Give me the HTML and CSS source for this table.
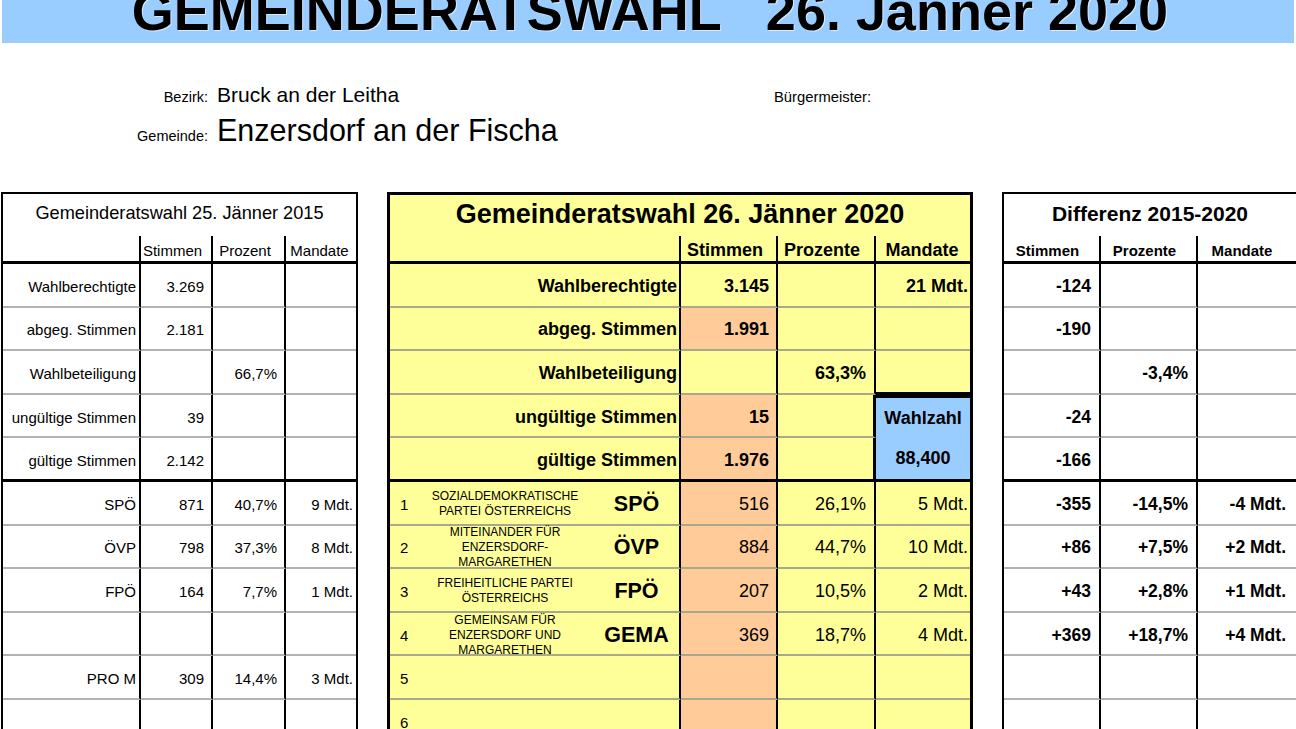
FILE: index.html
```html
<!DOCTYPE html>
<html lang="de">
<head>
<meta charset="utf-8">
<title>Gemeinderatswahl 26. Jänner 2020</title>
<link rel="stylesheet" href="styles.css">
</head>
<body>
<div class="band"><h1>GEMEINDERATSWAHL   26. Jänner 2020</h1></div>

<div class="info">
  <div class="row"><span class="lbl">Bezirk:</span><span class="v1">Bruck an der Leitha</span><span class="bm">Bürgermeister:</span></div>
  <div class="row row2"><span class="lbl">Gemeinde:</span><span class="v2">Enzersdorf an der Fischa</span></div>
</div>

<div class="tables">
  <!-- 2015 -->
  <div class="tbl t-old">
    <div class="ttl">Gemeinderatswahl 25. Jänner 2015</div>
    <div class="c h a"></div><div class="c h b">Stimmen</div><div class="c h c3">Prozent</div><div class="c h d e">Mandate</div>

    <div class="c a">Wahlberechtigte</div><div class="c b">3.269</div><div class="c c3"></div><div class="c d e"></div>
    <div class="c a">abgeg. Stimmen</div><div class="c b">2.181</div><div class="c c3"></div><div class="c d e"></div>
    <div class="c a">Wahlbeteiligung</div><div class="c b"></div><div class="c c3">66,7%</div><div class="c d e"></div>
    <div class="c a">ungültige Stimmen</div><div class="c b">39</div><div class="c c3"></div><div class="c d e"></div>
    <div class="c a s">gültige Stimmen</div><div class="c b s">2.142</div><div class="c c3 s"></div><div class="c d e s"></div>

    <div class="c a">SPÖ</div><div class="c b">871</div><div class="c c3">40,7%</div><div class="c d e">9 Mdt.</div>
    <div class="c a">ÖVP</div><div class="c b">798</div><div class="c c3">37,3%</div><div class="c d e">8 Mdt.</div>
    <div class="c a">FPÖ</div><div class="c b">164</div><div class="c c3">7,7%</div><div class="c d e">1 Mdt.</div>
    <div class="c a"></div><div class="c b"></div><div class="c c3"></div><div class="c d e"></div>
    <div class="c a">PRO M</div><div class="c b">309</div><div class="c c3">14,4%</div><div class="c d e">3 Mdt.</div>
    <div class="c a"></div><div class="c b"></div><div class="c c3"></div><div class="c d e"></div>
  </div>

  <!-- 2020 -->
  <div class="tbl t-new">
    <div class="ttl">Gemeinderatswahl 26. Jänner 2020</div>
    <div class="c h a"></div><div class="c h b">Stimmen</div><div class="c h c3">Prozente</div><div class="c h d e">Mandate</div>

    <div class="c a">Wahlberechtigte</div><div class="c b">3.145</div><div class="c c3"></div><div class="c d e">21 Mdt.</div>
    <div class="c a">abgeg. Stimmen</div><div class="c b o">1.991</div><div class="c c3"></div><div class="c d e"></div>
    <div class="c a">Wahlbeteiligung</div><div class="c b"></div><div class="c c3">63,3%</div><div class="c d e nb"></div>
    <div class="c a">ungültige Stimmen</div><div class="c b o">15</div><div class="c c3 wl"></div>
    <div class="wz"><span>Wahlzahl</span><span>88,400</span></div>
    <div class="c a s">gültige Stimmen</div><div class="c b o s">1.976</div><div class="c c3 wl s"></div>

    <div class="c a p"><span class="num">1</span><span class="pn">SOZIALDEMOKRATISCHE<br>PARTEI ÖSTERREICHS</span><span class="pa">SPÖ</span></div><div class="c b o p">516</div><div class="c c3 p">26,1%</div><div class="c d e p">5 Mdt.</div>
    <div class="c a p"><span class="num">2</span><span class="pn">MITEINANDER FÜR<br>ENZERSDORF-<br>MARGARETHEN</span><span class="pa">ÖVP</span></div><div class="c b o p">884</div><div class="c c3 p">44,7%</div><div class="c d e p">10 Mdt.</div>
    <div class="c a p"><span class="num">3</span><span class="pn">FREIHEITLICHE PARTEI<br>ÖSTERREICHS</span><span class="pa">FPÖ</span></div><div class="c b o p">207</div><div class="c c3 p">10,5%</div><div class="c d e p">2 Mdt.</div>
    <div class="c a p"><span class="num">4</span><span class="pn">GEMEINSAM FÜR<br>ENZERSDORF UND<br>MARGARETHEN</span><span class="pa">GEMA</span></div><div class="c b o p">369</div><div class="c c3 p">18,7%</div><div class="c d e p">4 Mdt.</div>
    <div class="c a p"><span class="num">5</span><span class="pn"></span><span class="pa"></span></div><div class="c b o p"></div><div class="c c3 p"></div><div class="c d e p"></div>
    <div class="c a p"><span class="num">6</span><span class="pn"></span><span class="pa"></span></div><div class="c b o p"></div><div class="c c3 p"></div><div class="c d e p"></div>
  </div>

  <!-- Differenz -->
  <div class="tbl t-diff">
    <div class="ttl">Differenz 2015-2020</div>
    <div class="c h a">Stimmen</div><div class="c h b">Prozente</div><div class="c h d e">Mandate</div>

    <div class="c a">-124</div><div class="c b"></div><div class="c d e"></div>
    <div class="c a">-190</div><div class="c b"></div><div class="c d e"></div>
    <div class="c a"></div><div class="c b">-3,4%</div><div class="c d e"></div>
    <div class="c a">-24</div><div class="c b"></div><div class="c d e"></div>
    <div class="c a s">-166</div><div class="c b s"></div><div class="c d e s"></div>

    <div class="c a">-355</div><div class="c b">-14,5%</div><div class="c d e">-4 Mdt.</div>
    <div class="c a">+86</div><div class="c b">+7,5%</div><div class="c d e">+2 Mdt.</div>
    <div class="c a">+43</div><div class="c b">+2,8%</div><div class="c d e">+1 Mdt.</div>
    <div class="c a">+369</div><div class="c b">+18,7%</div><div class="c d e">+4 Mdt.</div>
    <div class="c a"></div><div class="c b"></div><div class="c d e"></div>
    <div class="c a"></div><div class="c b"></div><div class="c d e"></div>
  </div>
</div>
</body>
</html>
```

FILE: styles.css
```css
* { box-sizing: border-box; }
html, body { margin: 0; padding: 0; overflow: hidden; background: #fff; }
body {
  width: 1296px;
  height: 729px;
  font-family: "Liberation Sans", Arial, sans-serif;
  color: #000;
}

/* title band */
.band {
  margin: 0 2px;
  height: 43px;
  background: #99ccff;
  overflow: hidden;
}
.band h1 {
  margin: -16px 0 0;
  padding-left: 4px;
  font-size: 54px;
  line-height: 54px;
  font-weight: 700;
  text-align: center;
  white-space: pre;
  text-shadow: 1px 1px 0 rgba(255,255,255,0.6);
}

/* info lines */
.info { height: 149px; padding-top: 40px; }
.row { display: flex; align-items: baseline; }
.row2 { margin-top: 6px; }
.lbl { width: 208px; margin-right: 9px; text-align: right; font-size: 14.5px; }
.v1 { width: 557px; font-size: 21px; line-height: 24px; }
.v2 { font-size: 30.5px; line-height: 34px; }
.bm { font-size: 14.8px; }

/* tables */
.tables {
  display: flex;
  align-items: flex-start;
  gap: 29px;
  padding-left: 1px;
}
.tbl {
  display: grid;
  border: 2px solid #000;
  flex: none;
}
.ttl {
  grid-column: 1 / -1;
  display: flex;
  align-items: center;
  justify-content: center;
  padding-bottom: 3px;
  white-space: nowrap;
}
.c {
  display: flex;
  align-items: center;
  justify-content: flex-end;
  padding-top: 3px;
  border-right: 2px solid #000;
  border-bottom: 2px solid #b2b2b2;
  white-space: nowrap;
}
.c.e { border-right: 0; }
.c.h {
  justify-content: center;
  border-bottom: 3px solid #000;
  padding: 3px 0 0 0;
}
.c.s { border-bottom: 3px solid #000; }

/* 2015 table */
.t-old {
  grid-template-columns: 138px 72px 73px 70px;
  grid-template-rows: 42px 28px repeat(11, 43.6px);
}
.t-old .ttl { font-size: 18.2px; }
.t-old .c { font-size: 15px; }
.t-old .c.h { font-size: 15px; }
.t-old .a { padding-right: 3px; }
.t-old .b { padding-right: 7px; }
.t-old .c3 { padding-right: 7px; }
.t-old .d { padding-right: 3px; }

/* 2020 table */
.t-new {
  border-width: 3px;
  background: #ffff99;
  grid-template-columns: 291px 97px 98px 94px;
  grid-template-rows: 41px 28px repeat(11, 43.6px);
}
.t-new .ttl { font-size: 27px; font-weight: 700; }
.t-new .c { font-size: 18px; font-weight: 700; border-bottom-color: #a8a88a; }
.t-new .c.h { border-bottom-color: #000; }
.t-new .c.s { border-bottom-color: #000; }
.t-new .c.nb { border-bottom: 3px solid #000; }
.t-new .a { padding-right: 2px; }
.t-new .b { padding-right: 7px; }
.t-new .c3 { padding-right: 8px; }
.t-new .d { padding-right: 2px; }
.t-new .c.wl { border-right-width: 3px; }
.t-new .o { background: #ffcc99; }
.t-new .c.p { font-weight: 400; }
.t-new .c.a.p { justify-content: flex-start; padding: 3px 0 0 0; }
.num { width: 30px; padding-left: 10px; font-size: 15px; }
.pn { width: 170px; text-align: center; font-size: 12px; line-height: 15px; }
.pa { flex: 1; padding-left: 4px; text-align: center; font-size: 21.5px; font-weight: 700; }

.wz {
  grid-row: span 2;
  display: flex;
  flex-direction: column;
  background: #99ccff;
  border-top: 3px solid #000;
  border-bottom: 3px solid #000;
  font-size: 18px;
  font-weight: 700;
}
.wz span {
  flex: 1;
  display: flex;
  align-items: center;
  justify-content: center;
}

/* Differenz table */
.t-diff {
  grid-template-columns: 97px 97px 98px;
  grid-template-rows: 42px 28px repeat(11, 43.6px);
}
.t-diff .ttl { font-size: 21px; font-weight: 700; }
.t-diff .c { font-size: 17.5px; font-weight: 700; }
.t-diff .c.h { font-size: 15px; }
.t-diff .a { padding-right: 8px; }
.t-diff .b { padding-right: 8px; }
.t-diff .d { padding-right: 10px; }
```
